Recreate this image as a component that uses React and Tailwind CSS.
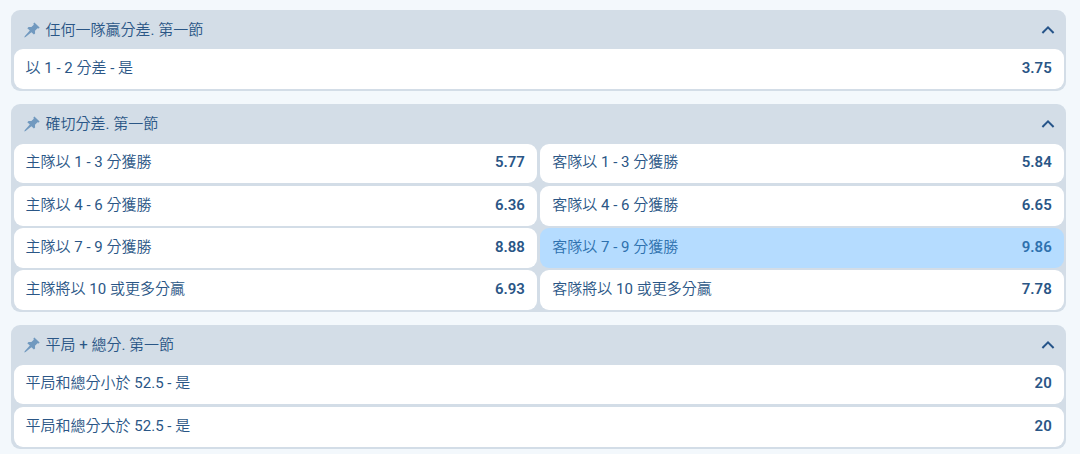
import React, { useState } from "react";

const FONT = "font-[Roboto,'Noto_Sans_CJK_TC_DemiLight','Noto_Sans_CJK_TC_Light','Noto_Sans_CJK_TC',sans-serif]";

const markets = [
    {
        id: 1,
        title: "任何一隊贏分差. 第一節",
        cols: 1,
        outcomes: [{ name: "以 1 - 2 分差 - 是", odds: "3.75" }],
    },
    {
        id: 2,
        title: "確切分差. 第一節",
        cols: 2,
        outcomes: [
            { name: "主隊以 1 - 3 分獲勝", odds: "5.77" },
            { name: "客隊以 1 - 3 分獲勝", odds: "5.84" },
            { name: "主隊以 4 - 6 分獲勝", odds: "6.36" },
            { name: "客隊以 4 - 6 分獲勝", odds: "6.65" },
            { name: "主隊以 7 - 9 分獲勝", odds: "8.88" },
            { name: "客隊以 7 - 9 分獲勝", odds: "9.86", active: true },
            { name: "主隊將以 10 或更多分贏", odds: "6.93" },
            { name: "客隊將以 10 或更多分贏", odds: "7.78" },
        ],
    },
    {
        id: 3,
        title: "平局 + 總分. 第一節",
        cols: 1,
        outcomes: [
            { name: "平局和總分小於 52.5 - 是", odds: "20" },
            { name: "平局和總分大於 52.5 - 是", odds: "20" },
        ],
    },
];

function PinIcon() {
    return (
        <svg className="w-4 h-4 shrink-0 text-[#7199bf]" viewBox="0 0 16 16" fill="currentColor">
            <path d="M10.4.4 15.6 5.4 14.8 6.4 13.5 6.2 11 8.7 11.1 11.4 9.9 12.6 7.4 10.2 1.6 15.1.3 15.6.7 14.2 5.8 8.6 3.3 6.2 4.6 5 7.4 5.1 9.8 2.7 9.4 1.4Z" />
        </svg>
    );
}

function Chevron({ open }) {
    return (
        <svg
            className={open ? "w-[14px] h-[10px]" : "w-[14px] h-[10px] rotate-180"}
            viewBox="0 0 14 10"
            fill="none"
            stroke="#265489"
            strokeWidth="2"
        >
            <path d="M1.4 8 7 2.4 12.6 8" />
        </svg>
    );
}

function Outcome({ item }) {
    return (
        <button
            className={
                item.active
                    ? "flex items-center justify-between h-[39.7px] pl-3 pr-[12.4px] pb-[2px] rounded-[9px] cursor-pointer bg-[#b5dcff] text-[#2e71ae]"
                    : "flex items-center justify-between h-[39.7px] pl-3 pr-[12.4px] pb-[2px] rounded-[9px] cursor-pointer bg-white text-[#2a5686]"
            }
        >
            <span>{item.name}</span>
            <span className="font-semibold">{item.odds}</span>
        </button>
    );
}

function Market({ market }) {
    const [open, setOpen] = useState(true);

    return (
        <div className="rounded-[9px] bg-[#d3dde7] px-[2.3px] pb-[2px]">
            <div
                className="flex items-center h-[39.7px] pl-[10px] pr-[9px] cursor-pointer text-[#2a5686]"
                onClick={() => setOpen(!open)}
            >
                <PinIcon />
                <span className="ml-[5.9px] flex-1">{market.title}</span>
                <Chevron open={open} />
            </div>
            {open && (
                <div className={market.cols === 2 ? "grid grid-cols-2 gap-x-[3px] gap-y-[2.6px]" : "grid grid-cols-1 gap-[2.6px]"}>
                    {market.outcomes.map((item) => (
                        <Outcome key={item.name} item={item} />
                    ))}
                </div>
            )}
        </div>
    );
}

function App() {
    return (
        <div className={`h-screen overflow-hidden bg-[#f3f8fc] pt-[9.7px] pl-[11.3px] pr-[13.6px] text-[15px] leading-5 ${FONT}`}>
            <div className="flex flex-col gap-[12.8px]">
                {markets.map((market) => (
                    <Market key={market.id} market={market} />
                ))}
            </div>
        </div>
    );
}

export default App;
